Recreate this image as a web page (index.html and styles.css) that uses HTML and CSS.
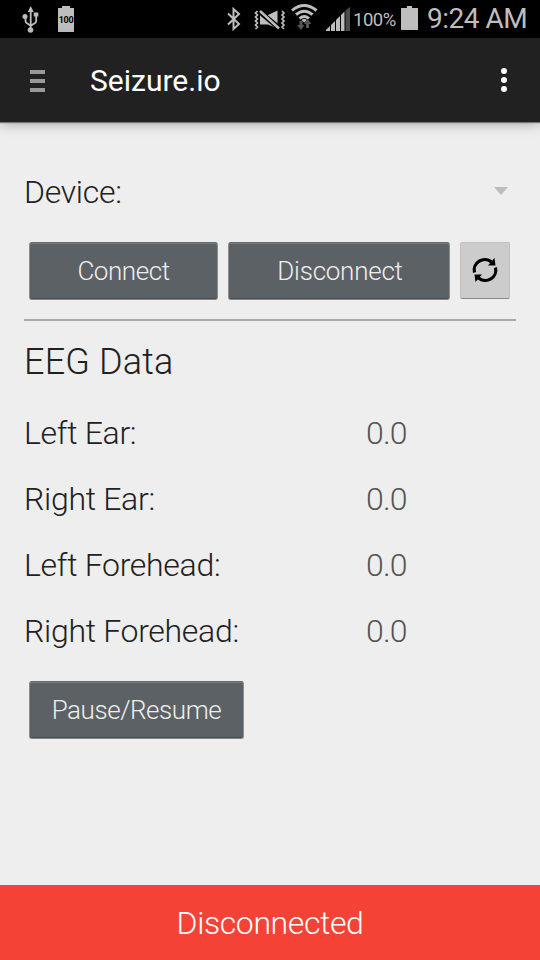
FILE: index.html
```
<!DOCTYPE html>
<html lang="en">
<head>
<meta charset="utf-8">
<title>Seizure.io</title>
<link rel="stylesheet" href="styles.css">
</head>
<body>
<div class="screen">
  <div class="status">
    <svg class="usb" width="18" height="28" viewBox="0 0 18 28"><g fill="none" stroke="#bebebe" stroke-width="1.800"><path d="M8.700 4v19M3.500 11v4q0 2 2 2.600l3.200 2.200M14.200 9v6q0 2-2 2.600l-3.500 2.200"/></g><g fill="#bebebe"><path d="M8.700 0l3 6h-6zM11.700 6.500h4.600v4h-4.600z"/><circle cx="3" cy="10.500" r="2.500"/><circle cx="8.500" cy="24" r="2.800"/></g></svg>
    <div class="battery-full"><span>100</span></div>
    <svg class="bluetooth" width="14" height="24" viewBox="0 0 14 24"><path d="M1 6.500l11 10.500-5.500 5V2l5.500 5L1 17.500" fill="none" stroke="#bebebe" stroke-width="2"/></svg>
    <svg class="mute" width="32" height="20" viewBox="0 0 32 20"><path d="M6 5h8L23.500 .5v18L14 14.500H6z" fill="#bebebe"/><path d="M6 2l19 16" stroke="#000" stroke-width="5"/><path d="M6 1l19 17.500" stroke="#bebebe" stroke-width="2.400"/><path d="M3.500 1l-2 2 2 2-2 2 2 2-2 2 2 2-2 2 2 2-2 2M28 1l2 2-2 2 2 2-2 2 2 2-2 2 2 2-2 2 2 2" fill="none" stroke="#bebebe" stroke-width="1.700"/></svg>
    <svg class="wifi" width="28" height="26" viewBox="0 0 28 26"><g fill="none" stroke="#bebebe" stroke-width="2.900"><path d="M1 6.500q12-10 24.500 0M5 10.700q8.200-7 16.500 0M8.500 14.500q4.800-4 9.500 0"/></g><path d="M10.500 16q2.800-2 5.500 0l-2.800 2.500z" fill="#bebebe"/><path d="M8.500 17h3v4h2L10 26l-4-5h2.500zM15 24h3v-4h2.500l-4-5-3.500 5h2z" fill="#555"/></svg>
    <svg class="signal" width="24" height="24" viewBox="0 0 24 24"><path d="M0 24v-1l4-4v5zM5 24v-6l4-4v10zM10 24V13l4-4v15zM15 24V8l3.500-3.500V24z" fill="#bebebe"/><path d="M19.500 24V3.500L24 0v24z" fill="#4c4c4c"/></svg>
    <span class="percent">100%</span>
    <svg class="battery" width="17" height="24" viewBox="0 0 17 24"><path d="M0 2h6V0h5v2h6v22H0z" fill="#bebebe"/></svg>
    <span class="clock">9:24 AM</span>
  </div>
  <header class="bar">
    <div class="drawer"><i></i><i></i><i></i></div>
    <h1>Seizure.io</h1>
    <div class="overflow"><i></i><i></i><i></i></div>
  </header>
  <main>
    <div class="device"><span>Device:</span><i class="caret"></i></div>
    <div class="buttons">
      <button class="btn connect">Connect</button>
      <button class="btn disconnect">Disconnect</button>
      <button class="refresh" aria-label="Refresh"><svg width="26" height="26" viewBox="0 0 26 26"><g fill="none" stroke="#000" stroke-width="3.200"><path d="M2.500 15.500A10.500 10.500 0 0 1 19.500 5M23.500 10.500A10.500 10.500 0 0 1 6.500 21"/></g><path d="M22.500 1l1 7.500H16zM3.500 25l-1-7.500H10z"/></svg></button>
    </div>
    <hr>
    <h2>EEG Data</h2>
    <dl>
      <div><dt>Left Ear:</dt><dd>0.0</dd></div>
      <div><dt>Right Ear:</dt><dd>0.0</dd></div>
      <div><dt>Left Forehead:</dt><dd>0.0</dd></div>
      <div><dt>Right Forehead:</dt><dd>0.0</dd></div>
    </dl>
    <button class="btn pause">Pause/Resume</button>
  </main>
  <footer>Disconnected</footer>
</div>
</body>
</html>
```
FILE: styles.css
```
* { box-sizing: border-box; }
body { margin: 0; font-family: Roboto, sans-serif; }
.screen { width: 540px; height: 960px; display: flex; flex-direction: column; background: #eee; overflow: hidden; }
svg { display: block; flex: none; }
.status { height: 38px; flex: none; background: #000; color: #bebebe; display: flex; align-items: flex-start; white-space: nowrap; }
.usb { margin: 6px 0 0 22px; }
.battery-full { flex: none; width: 16px; height: 26px; margin: 6px 0 0 18px; background: linear-gradient(#bebebe, #bebebe) 50% 0 / 8px 2px no-repeat, linear-gradient(#bebebe, #bebebe) 0 2px / 16px 24px no-repeat; color: #000; font-size: 9px; font-weight: 700; line-height: 29px; text-align: center; }
.battery-full span { letter-spacing: -.3px; }
.bluetooth { margin: 7px 0 0 153px; }
.mute { margin: 10px 0 0 13px; }
.wifi { margin: 4px 0 0 5px; }
.signal { margin: 7px 0 0 7px; }
.percent { flex: none; margin-left: 3px; width: 48px; font-size: 18.5px; letter-spacing: -.5px; line-height: 40px; }
.battery { margin: 6px 0 0; }
.clock { margin-left: 9px; font-size: 28px; letter-spacing: -.5px; line-height: 38px; }
.bar { height: 84px; flex: none; display: flex; align-items: center; background: #212121; color: #fff; box-shadow: 0 1px 1px #777, 0 2px 12px rgba(0, 0, 0, .3); padding: 0 33px 0 30px; }
.drawer { width: 15px; display: flex; flex-direction: column; gap: 5px; margin-top: 2px; }
.drawer i { height: 4px; background: #999; }
h1 { margin: 0 0 0 45px; font-size: 30px; font-weight: 400; line-height: 84px; padding-top: 2px; flex: 1; }
.overflow { display: flex; flex-direction: column; gap: 3px; }
.overflow i { width: 6px; height: 6px; border-radius: 50%; background: #fff; }
main { flex: 1; padding: 35px 24px 0; color: #212121; font-weight: 300; }
.device { height: 70px; display: flex; align-items: center; justify-content: space-between; font-size: 32px; letter-spacing: -.3px; padding-right: 8px; }
.caret { border: 7px solid transparent; border-top: 8px solid #bdbdbd; border-bottom: 0; margin-top: -3px; }
.buttons { display: flex; padding: 15px 6px 0 5px; gap: 10px; height: 92px; }
.btn { height: 58px; padding: 0; border: 1px solid #8b8f91; border-top-color: #66696b; border-bottom-color: #85898b; border-radius: 3px; background: #5c6165; box-shadow: inset 0 1px #777b7e, inset 0 -1px #484d50; color: #eee; font: 300 26px/56px Roboto, sans-serif; letter-spacing: -.45px; }
.connect { flex: none; width: 189px; }
.disconnect { flex: none; width: 222px; letter-spacing: -.25px; padding-left: 2px; }
.refresh { flex: none; width: 50px; height: 57px; padding: 0 0 2px; border: 1px solid #c0c0c0; border-bottom: 1px solid #888; border-radius: 2px; background: #ccc; display: flex; align-items: center; justify-content: center; }
hr { height: 2px; margin: 0; border: 0; background: #aaa; }
h2 { margin: 0; height: 79px; font-size: 36px; font-weight: 300; letter-spacing: .15px; line-height: 82px; }
dl { margin: 0; font-size: 32px; line-height: 66px; letter-spacing: -.3px; }
dl div { display: grid; grid-template-columns: 342px 1fr; height: 66px; }
dd { margin: 0; color: #555; letter-spacing: -.8px; }
.pause { width: 215px; margin: 17px 0 0 5px; }
footer { height: 75px; flex: none; background: #f44336; color: #fff; text-align: center; font-size: 32px; font-weight: 300; letter-spacing: -.4px; line-height: 76px; }
```
